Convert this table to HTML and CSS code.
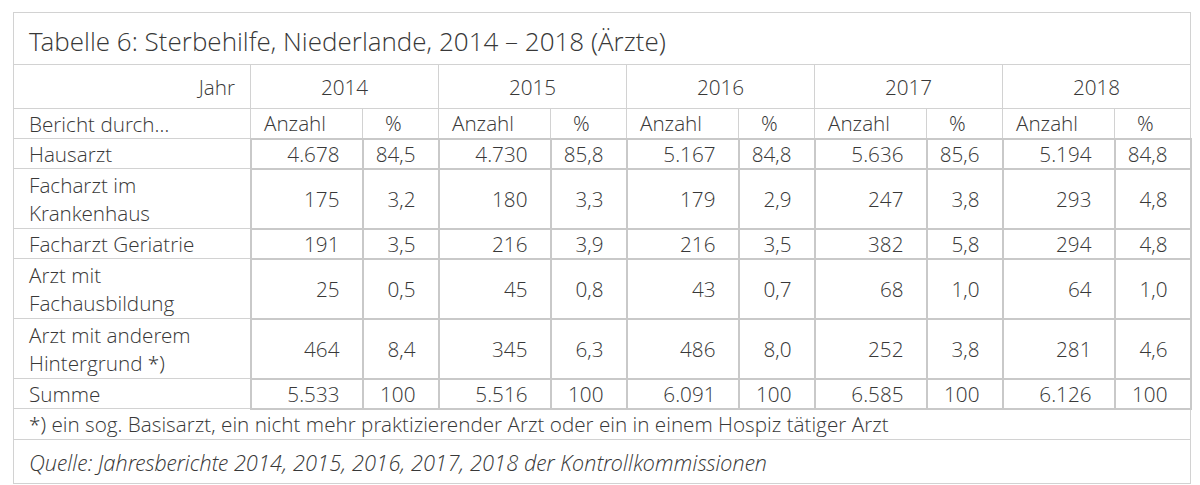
FILE: index.html
```html
<!DOCTYPE html>
<html lang="de">
<head>
<meta charset="utf-8">
<title>Tabelle 6</title>
<link rel="stylesheet" href="styles.css">
</head>
<body>
<table class="tbl">
  <colgroup>
    <col class="c-label">
    <col class="c-num"><col class="c-pct">
    <col class="c-num"><col class="c-pct">
    <col class="c-num"><col class="c-pct">
    <col class="c-num"><col class="c-pct">
    <col class="c-num"><col class="c-pct">
  </colgroup>
  <tr class="r-title"><td class="title" colspan="11">Tabelle 6: Sterbehilfe, Niederlande, 2014 – 2018 (Ärzte)</td></tr>
  <tr class="r-year">
    <td class="jahr">Jahr</td>
    <td class="year" colspan="2">2014</td>
    <td class="year" colspan="2">2015</td>
    <td class="year" colspan="2">2016</td>
    <td class="year" colspan="2">2017</td>
    <td class="year" colspan="2">2018</td>
  </tr>
  <tr class="r-sub">
    <td class="lbl">Bericht durch…</td>
    <td class="sub-a">Anzahl</td><td class="sub-p">%</td>
    <td class="sub-a">Anzahl</td><td class="sub-p">%</td>
    <td class="sub-a">Anzahl</td><td class="sub-p">%</td>
    <td class="sub-a">Anzahl</td><td class="sub-p">%</td>
    <td class="sub-a">Anzahl</td><td class="sub-p">%</td>
  </tr>
  <tr class="r-one">
    <td class="lbl">Hausarzt</td>
    <td class="n">4.678</td><td class="p">84,5</td>
    <td class="n">4.730</td><td class="p">85,8</td>
    <td class="n">5.167</td><td class="p">84,8</td>
    <td class="n">5.636</td><td class="p">85,6</td>
    <td class="n">5.194</td><td class="p">84,8</td>
  </tr>
  <tr class="r-two">
    <td class="lbl">Facharzt im<br>Krankenhaus</td>
    <td class="n">175</td><td class="p">3,2</td>
    <td class="n">180</td><td class="p">3,3</td>
    <td class="n">179</td><td class="p">2,9</td>
    <td class="n">247</td><td class="p">3,8</td>
    <td class="n">293</td><td class="p">4,8</td>
  </tr>
  <tr class="r-one">
    <td class="lbl">Facharzt Geriatrie</td>
    <td class="n">191</td><td class="p">3,5</td>
    <td class="n">216</td><td class="p">3,9</td>
    <td class="n">216</td><td class="p">3,5</td>
    <td class="n">382</td><td class="p">5,8</td>
    <td class="n">294</td><td class="p">4,8</td>
  </tr>
  <tr class="r-two">
    <td class="lbl">Arzt mit<br>Fachausbildung</td>
    <td class="n">25</td><td class="p">0,5</td>
    <td class="n">45</td><td class="p">0,8</td>
    <td class="n">43</td><td class="p">0,7</td>
    <td class="n">68</td><td class="p">1,0</td>
    <td class="n">64</td><td class="p">1,0</td>
  </tr>
  <tr class="r-two">
    <td class="lbl">Arzt mit anderem<br>Hintergrund *)</td>
    <td class="n">464</td><td class="p">8,4</td>
    <td class="n">345</td><td class="p">6,3</td>
    <td class="n">486</td><td class="p">8,0</td>
    <td class="n">252</td><td class="p">3,8</td>
    <td class="n">281</td><td class="p">4,6</td>
  </tr>
  <tr class="r-sum">
    <td class="lbl">Summe</td>
    <td class="n">5.533</td><td class="p">100</td>
    <td class="n">5.516</td><td class="p">100</td>
    <td class="n">6.091</td><td class="p">100</td>
    <td class="n">6.585</td><td class="p">100</td>
    <td class="n">6.126</td><td class="p">100</td>
  </tr>
  <tr class="r-note"><td class="note" colspan="11">*) ein sog. Basisarzt, ein nicht mehr praktizierender Arzt oder ein in einem Hospiz tätiger Arzt</td></tr>
  <tr class="r-src"><td class="src" colspan="11">Quelle: Jahresberichte 2014, 2015, 2016, 2017, 2018 der Kontrollkommissionen</td></tr>
</table>
</body>
</html>
```

FILE: styles.css
```css
html, body {
  margin: 0;
  padding: 0;
  background: #ffffff;
}

body {
  padding: 12px 0 0 13px;
  font-family: "Open Sans Light", "Open Sans", "Liberation Sans", sans-serif;
  font-weight: 300;
  color: #383838;
}

.tbl {
  border-collapse: collapse;
  table-layout: fixed;
  width: 1177px;
  font-size: 20.7px;
  line-height: 28px;
}

.c-label { width: 237px; }
.c-num { width: 112px; }
.c-pct { width: 76px; }

.tbl td {
  border: 1px solid #d2d2d2;
  padding: 0;
  vertical-align: middle;
  white-space: nowrap;
}

.r-title { height: 52px; }
.r-year { height: 44px; }
.r-sub { height: 30px; }
.r-one { height: 30px; }
.r-two { height: 60px; }
.r-sum { height: 29px; }
.r-note { height: 31px; }
.r-src { height: 44px; }

.tbl td.title {
  font-size: 26px;
  padding: 4px 0 0 15px;
}

.tbl td.jahr {
  text-align: right;
  padding-right: 15px;
}

.tbl td.year {
  text-align: center;
}

.tbl td.lbl {
  padding-left: 15px;
}

.tbl td.sub-a {
  padding-left: 13px;
}

.tbl td.sub-p {
  padding-left: 22px;
}

.tbl td.n,
.tbl td.p {
  border: 2px solid #c9c9c9;
  text-align: right;
  padding-right: 22px;
}

.tbl td.note {
  padding-left: 15px;
}

.tbl td.src {
  padding-left: 15px;
  font-size: 22px;
  font-style: italic;
}
```
